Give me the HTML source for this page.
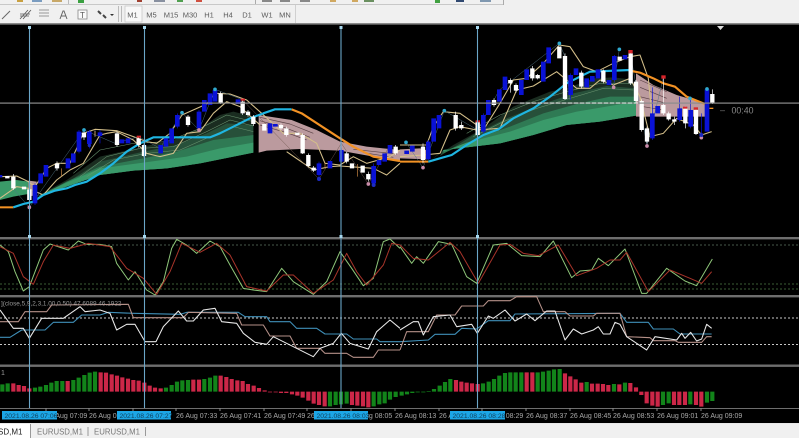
<!DOCTYPE html>
<html><head><meta charset="utf-8"><title>EURUSD,M1</title>
<style>
html,body{margin:0;padding:0;background:#000}
#p{position:relative;width:799px;height:438px;overflow:hidden;background:#000}
svg{position:absolute;left:0;top:0;filter:blur(.35px)}
text{font-family:"Liberation Sans",sans-serif}
.f{fill:none;stroke-linejoin:round}
</style></head><body><div id="p">
<svg width="799" height="438" viewBox="0 0 799 438">
<rect width="799" height="438" fill="#000"/>
<!-- main chart, left -->
<g transform="scale(.33333)">
<polygon fill="#3a9a68" points="0,545 50,540 85,545 85,582 40,590 0,600"/>
<polygon fill="#b99a9a" points="85,542 110,545 110,585 85,590"/>
<polygon fill="#1a2c20" points="110,590 200,540 300,470 430,440 520,420 600,385 660,345 700,335 760,350 760,458 600,490 500,505 400,512 300,525 200,560"/>
<polygon fill="#27503a" points="130,580 220,535 300,485 430,455 530,435 620,400 680,370 760,375 760,458 600,490 500,505 400,512 300,525 200,560"/>
<polygon fill="#2f7a54" points="120,588 200,545 300,500 430,475 530,455 640,420 760,405 760,458 600,490 500,505 400,512 300,525 200,560"/>
<polygon fill="#3a9a6a" points="110,590 200,548 300,505 430,488 560,470 660,445 760,428 760,458 600,490 500,505 400,512 300,525 200,560"/>
<g class="f" stroke="#6a9470" stroke-width="1.6">
<polyline points="220,520 300,450 400,430 500,425 600,385 680,345 760,365"/>
<polyline points="240,530 320,470 420,445 520,440 620,395 690,360 760,378"/>
<polyline points="260,530 340,480 440,460 540,450 630,410 700,380 760,395"/>
</g>
<polygon fill="#000" points="762,372 776,345 776,460 762,460"/>
<polygon fill="#bb9a9e" points="776,345 875,360 950,390 1020,425 1100,440 1200,450 1200,482 1120,470 1020,452 900,447 800,452 776,458"/>
<g class="f" stroke="#5a4145" stroke-width="2">
<polyline points="780,352 870,372 940,400"/><polyline points="780,362 860,385 930,412"/><polyline points="780,375 860,398 920,420"/><polyline points="1060,448 1190,462"/><polyline points="1090,458 1180,472"/>
</g>
<g class="f" stroke="#d4bf8a" stroke-width="3.2">
<polyline points="0,530 50,528 85,545 105,560 140,505 170,490 210,490 250,400 285,388 350,392 400,410 440,425 470,430 510,400 546,345 620,312 645,280 690,282 740,300 785,340 850,400 900,400 950,430 975,490 1020,495 1060,470 1100,490 1170,470 1200,450"/>
<polyline points="0,595 50,560 85,565 130,585 170,540 210,510 250,490 300,405 320,400 350,395 400,420 440,460 480,470 520,460 560,400 600,395 640,340 680,305 720,320 780,375"/>
<polyline points="860,455 940,510 990,500 1020,498 1120,505 1160,525 1200,490"/>
</g>
<g class="f" stroke="#4f7484" stroke-width="1.4">
<polyline points="88,622 252,390 345,430 416,410 480,445 546,338 597,390 645,268"/>
<polyline points="645,268 730,300"/>
<polyline points="30,555 88,622"/>
</g>
<polyline class="f" stroke="#70584f" stroke-width="1.4" points="728,300 957,537 1024,430 1105,552 1170,435"/>
<polyline class="f" stroke="#f39224" stroke-width="6" points="0,622 40,622"/>
<polyline class="f" stroke="#1fb5e2" stroke-width="6.5" points="40,622 70,612 100,605 130,585 165,572 200,565 225,555 260,545 300,520 340,490 380,455 420,430 460,412 630,412 660,400 700,380 750,355 790,340 825,328 875,328"/>
<polyline class="f" stroke="#f39224" stroke-width="6.5" points="875,328 905,340 1020,415 1060,440 1120,470 1200,483"/>
<path class="f" stroke="#fff" stroke-width="2" d="M40 522V570M88 560V610M171 484V512M252 390V420M285 392V410M351 394V440M416 410V442M432 430V472M564 345V380M662 275V312M728 300V345M744 330V350M760 345V378M843 370V390M859 380V410M908 400V462M925 460V502M941 498V516M1040 455V490M1105 515V545M1187 435V465"/>
<path class="f" stroke="#fff" stroke-width="13" d="M40 530V565M22 528V535M72 560V568M88 568V600M171 490V505M252 398V412M351 400V435M416 415V435M432 435V468M564 350V375M662 280V310M728 305V340M744 335V345M760 350V372M793 372V392M843 375V385M859 385V405M892 398V405M908 405V460M925 465V498M941 503V512M1040 460V485M1056 490V505M1088 497V518M1105 522V538M1187 440V460"/>
<path class="f" stroke="#0a12d6" stroke-width="2" d="M105 550V615M237 390V460M268 390V445M300 390V430M532 340V385M597 330V390M1121 490V560M957 485V540M1024 445V490"/>
<path class="f" stroke="#0a12d6" stroke-width="14" d="M0 525V532M105 555V610M122 520V550M138 495V530M204 475V505M220 460V488M237 395V455M268 395V432M300 397V408M366 418V430M384 415V430M482 435V460M498 415V440M515 385V430M532 345V380M597 335V385M613 300V335M630 280V315M645 270V305M714 298V312M810 370V400M826 372V380M957 490V525M990 483V505M1024 450V485M1121 498V550M1137 480V495M1154 460V485M1170 435V460"/>
<g fill="#2fa9cf"><circle cx="252" cy="390" r="5.5"/><circle cx="546" cy="338" r="5.5"/><circle cx="645" cy="268" r="5.5"/></g>
<g fill="#d8252a"><rect x="410" y="407" width="13" height="6"/><rect x="722" y="296" width="13" height="6"/></g>
<g fill="#c98ba8"><circle cx="88" cy="622" r="5.5"/><circle cx="597" cy="390" r="5.5"/><circle cx="1105" cy="552" r="5.5"/></g>
<g fill="#1c2ac0"><circle cx="957" cy="537" r="6"/><circle cx="1121" cy="555" r="6"/><circle cx="268" cy="436" r="5"/></g>
<path class="f" stroke="#d08a44" stroke-width="2" d="M185 505V530M285 395V408M975 488V505M1072 492V530"/>
</g>
<!-- main chart, right -->
<g transform="translate(400,0) scale(.33333)">
<polygon fill="#bb9a9e" points="0,448 60,445 85,452 85,478 0,475"/>
<polygon fill="#1a2c20" points="95,478 160,435 250,385 340,320 400,295 450,275 500,265 580,235 640,232 690,238 708,260 708,347 600,365 500,375 400,405 300,430 200,442 130,450"/>
<polygon fill="#27503a" points="120,468 220,405 320,355 420,315 520,280 620,258 708,265 708,347 600,365 500,375 400,405 300,430 200,442 130,450"/>
<polygon fill="#2f7a54" points="130,460 230,415 330,380 430,340 530,312 630,290 708,290 708,347 600,365 500,375 400,405 300,430 200,442 130,450"/>
<polygon fill="#3a9a6a" points="130,455 200,428 330,395 430,360 530,335 630,318 708,305 708,347 600,365 500,375 400,405 300,430 200,442 130,450"/>
<g class="f" stroke="#6a9470" stroke-width="1.6">
<polyline points="200,400 300,345 400,305 500,275 600,250 700,250"/>
<polyline points="220,410 310,365 410,325 510,295 610,265 700,270"/>
</g>
<polygon fill="#bb9a9e" points="708,220 760,255 830,285 915,310 915,350 708,350"/>
<g class="f" stroke="#5a4145" stroke-width="2">
<polyline points="720,240 800,275"/><polyline points="720,262 800,295"/><polyline points="720,290 800,310"/><polyline points="730,320 790,330"/>
</g>
<g class="f" stroke="#d4bf8a" stroke-width="3.2">
<polyline points="0,435 80,435 100,380 130,335 180,340 230,375 250,390 300,310 340,240 380,235 430,190 478,135 510,140 550,200 590,215 640,190 690,170 720,165 745,235 755,340"/>
<polyline points="0,470 70,465 120,460 150,390 180,380 230,390 300,385 350,270 400,258 470,215 500,240 530,265 570,265 600,240 640,255 690,235 720,290 750,410 790,400 830,355 880,375 905,405 935,395"/>
</g>
<g class="f" stroke="#4f7484" stroke-width="1.4">
<polyline points="18,427 69,503 133,332 233,390 298,270 478,130 495,170 510,300"/>
<polyline points="640,262 658,148"/><polyline points="690,155 741,438 790,232"/>
</g>
<polyline class="f" stroke="#f39224" stroke-width="6" points="0,485 85,485"/>
<polyline class="f" stroke="#1fb5e2" stroke-width="6.500" points="85,485 120,475 155,465 200,435 250,405 295,388 340,355 400,325 450,290 500,250 570,215 690,210"/>
<polyline class="f" stroke="#f39224" stroke-width="6.500" points="690,212 720,218 760,235 790,250 825,260 860,290 915,312"/>
<path class="f" stroke="#f39224" stroke-width="4" d="M928 325H940"/>
<path class="f" stroke="#fff" stroke-width="2" d="M69 430V490M167 335V392M184 365V390M233 360V410M282 295V320M331 235V278M348 250V278M397 198V242M413 222V238M495 160V300M544 212V265M610 208V250M692 155V255M708 240V310M725 298V395M741 380V430M790 235V345M806 335V362M823 350V375M856 320V385M888 325V405M937 268V312"/>
<path class="f" stroke="#fff" stroke-width="13" d="M69 440V480M167 345V385M184 375V385M233 365V405M282 300V315M331 240V250M348 255V272M397 205V235M413 225V235M478 140V175M495 168V297M544 218V260M610 212V245M659 170V182M692 160V250M708 245V303M725 303V390M741 385V425M790 315V340M806 340V358M823 358V365M856 325V370M888 330V402M937 282V308"/>
<path class="f" stroke="#0a12d6" stroke-width="2" d="M85 420V480M250 340V400M512 220V300M643 165V245M757 262V420M839 290V365M872 295V385M905 340V400"/>
<path class="f" stroke="#0a12d6" stroke-width="14" d="M20 452V462M37 437V455M85 425V478M101 355V425M117 345V385M250 345V395M265 300V345M298 268V305M315 230V270M364 240V285M380 208V240M430 185V245M446 142V190M512 225V285M528 205V225M560 235V262M577 228V245M594 208V235M627 240V255M643 168V240M675 165V178M757 340V415M773 318V340M839 325V360M872 330V380M921 268V395"/>
<g fill="#2fa9cf"><circle cx="18" cy="427" r="5.5"/><circle cx="133" cy="332" r="5.5"/><circle cx="478" cy="130" r="5.5"/><circle cx="658" cy="148" r="5.5"/><circle cx="870" cy="295" r="5.5"/><circle cx="921" cy="267" r="5.5"/></g>
<g fill="#d8252a"><rect x="227" y="361" width="13" height="6"/><rect x="685" y="150" width="13" height="10"/><rect x="784" y="226" width="13" height="10"/><rect x="849" y="320" width="13" height="6"/><rect x="881" y="322" width="13" height="7"/></g>
<g fill="#c98ba8"><circle cx="69" cy="503" r="5.5"/><circle cx="741" cy="438" r="5.5"/><circle cx="641" cy="262" r="5.5"/><circle cx="904" cy="413" r="5.5"/></g>
<circle cx="904" cy="405" r="6" fill="#1c2ac0"/>
</g>
<!-- crosshair -->
<rect x="0" y="102.500" width="799" height="1.2" fill="#8c8c8c"/>
<path d="M520 103H640" stroke="#e8e8e8" stroke-width="1" stroke-dasharray="4 2"/>
<!-- separators -->
<rect x="0" y="237" width="799" height="2.4" fill="#6e6e6e"/>
<rect x="0" y="295" width="799" height="2.4" fill="#6e6e6e"/>
<rect x="0" y="364.500" width="799" height="2.4" fill="#6e6e6e"/>
<rect x="0" y="408" width="799" height="1" fill="#6e6e6e"/>
<!-- level dashes -->
<path d="M0 245H799" stroke="#46584a" stroke-width="1" stroke-dasharray="2 2"/>
<path d="M0 284H799M0 289H799" stroke="#3a5c34" stroke-width="1" stroke-dasharray="2 2"/>
<path d="M0 318H799M0 344.500H799" stroke="#c8c8c8" stroke-width="1" stroke-dasharray="2 2"/>
<!-- histogram and oscillators -->
<g transform="translate(0,235) scale(.33333)">
<path class="f" stroke="#12841a" stroke-width="12.500" d="M7 470V448M23 470V445M105 470V458M121 470V455M138 470V450M154 470V443M170 470V438M187 470V438M220 470V435M236 470V428M253 470V420M269 470V413M285 470V410M498 470V458M515 470V450M531 470V440M547 470V436M564 470V435M613 470V432M630 470V428M646 470V422M990 470V514M1007 470V510M1023 470V508M1040 470V506M1121 470V514M1138 470V508M1154 470V505M1170 470V494M1187 470V486"/>
<path class="f" stroke="#cc2748" stroke-width="12.500" d="M40 470V445M56 470V450M72 470V453M88 470V460M203 470V438M302 470V412M318 470V413M335 470V418M351 470V422M367 470V427M384 470V431M400 470V435M416 470V437M433 470V443M449 470V452M465 470V458M482 470V460M580 470V434M597 470V434M662 470V422M679 470V426M695 470V432M712 470V436M728 470V438M744 470V447M761 470V452M777 470V459M794 470V466M810 470V472M827 470V472M843 470V474M859 470V474M876 470V478M892 470V482M908 470V488M925 470V497M941 470V506M957 470V510M974 470V514M1056 470V510M1072 470V512M1089 470V514M1105 470V517"/>
<polyline class="f" stroke="#8fc77a" stroke-width="3" points="0,30 25,50 45,110 70,168 88,155 130,45 150,27 205,45 235,18 260,28 300,28 335,35 350,85 385,135 405,110 440,165 465,180 490,140 515,40 530,13 560,30 590,55 630,18 660,35 690,90 730,160 760,165 800,170 845,100 880,140 940,178 980,140 1020,50 1055,100 1090,152 1120,130 1150,20 1170,12 1200,40"/>
<polyline class="f" stroke="#a8342a" stroke-width="3" points="0,35 40,55 70,125 100,148 130,80 160,30 210,40 265,25 330,35 380,100 430,130 470,178 510,110 545,25 600,52 650,25 690,60 740,155 800,168 850,120 880,120 940,175 1000,135 1040,55 1070,110 1100,150 1150,90 1175,25 1200,30"/>
<polyline class="f" stroke="#3f8fb8" stroke-width="3.2" points="0,307 30,307 65,285 135,285 160,262 220,262 245,240 300,240 325,232 400,235 540,238 560,232 715,232 735,245 800,245 810,260 870,260 890,280 950,280 975,297 1040,297 1060,312 1130,312 1140,320 1200,320"/>
<polyline class="f" stroke="#b59088" stroke-width="3.2" points="0,260 55,260 75,230 140,230 155,210 385,208 400,248 550,248 565,232 710,235 725,270 790,270 810,303 870,303 890,340 960,340 975,355 1040,355 1060,367 1120,367 1135,345 1200,345"/>
<polyline class="f" stroke="#e8e8e8" stroke-width="3.2" points="0,225 40,280 70,280 88,310 125,250 190,250 240,215 255,230 300,225 330,235 350,285 380,268 405,268 435,320 468,320 490,275 535,228 560,258 580,258 610,225 645,220 665,260 710,265 730,295 765,322 800,328 820,305 880,335 940,365 960,340 1000,325 1024,295 1050,325 1105,342 1130,290 1170,255 1200,280"/>
</g>
<g transform="translate(400,235) scale(.33333)">
<path class="f" stroke="#12841a" stroke-width="12.500" d="M5 470V482M21 470V478M37 470V474M53 470V472M70 470V472M86 470V468M102 470V462M119 470V452M135 470V441M151 470V432M249 470V445M266 470V440M282 470V432M298 470V422M315 470V414M331 470V412M347 470V412M364 470V412M413 470V412M429 470V410M446 470V407M462 470V403M479 470V402M560 470V441M642 470V447M675 470V443M789 470V510M806 470V505M871 470V508M921 470V503M937 470V498"/>
<path class="f" stroke="#cc2748" stroke-width="12.500" d="M168 470V435M184 470V440M200 470V443M216 470V445M233 470V447M380 470V412M397 470V412M495 470V415M511 470V424M527 470V433M544 470V443M576 470V446M593 470V446M609 470V447M625 470V450M658 470V448M691 470V444M708 470V457M724 470V480M740 470V505M757 470V512M773 470V515M822 470V510M838 470V510M855 470V510M888 470V510M904 470V515"/>
<polyline class="f" stroke="#8fc77a" stroke-width="3" points="0,35 35,85 50,65 70,85 115,20 155,28 200,125 230,145 280,30 320,25 365,62 420,65 460,18 515,128 540,108 575,105 595,70 625,92 675,42 725,175 740,175 800,100 855,138 890,152 937,72"/>
<polyline class="f" stroke="#a8342a" stroke-width="3" points="0,30 40,70 85,75 150,22 180,50 235,145 300,30 330,28 370,55 415,62 475,30 530,122 590,100 630,75 660,75 680,52 745,170 810,105 870,130 905,145 935,110"/>
<polyline class="f" stroke="#3f8fb8" stroke-width="3.2" points="0,320 85,315 105,298 165,298 185,280 230,282 265,257 330,257 345,237 660,235 680,262 745,262 760,282 820,282 840,297 935,297"/>
<polyline class="f" stroke="#b59088" stroke-width="3.2" points="0,345 20,290 85,290 110,240 165,240 185,213 250,213 265,197 330,197 350,185 410,185 430,230 495,230 510,243 580,243 590,235 660,235 680,305 750,308 760,317 825,317 835,322 905,322 920,305 935,305"/>
<polyline class="f" stroke="#e8e8e8" stroke-width="3.2" points="0,285 40,260 55,260 70,300 100,245 150,240 170,275 215,268 232,295 265,243 280,250 315,225 345,258 380,237 405,257 440,228 465,228 495,315 520,282 545,297 580,285 595,275 610,297 630,297 645,262 660,268 680,305 740,345 765,305 830,315 845,295 855,310 872,292 890,318 905,312 920,268 935,280"/>
</g>
<!-- vertical lines -->
<g stroke="#6aa6c8" stroke-width="1.1">
<path d="M29.500 27V408M144.500 27V408M341 27V408M477.500 27V408"/>
</g>
<g fill="#a8d8ee">
<rect x="28" y="26" width="3" height="3"/><rect x="143" y="26" width="3" height="3"/><rect x="339.500" y="26" width="3" height="3"/><rect x="476" y="26" width="3" height="3"/>
<rect x="28" y="235" width="3" height="3"/><rect x="143" y="235" width="3" height="3"/><rect x="339.500" y="235" width="3" height="3"/><rect x="476" y="235" width="3" height="3"/>
</g>
<polygon points="717,26 724,26 720.500,30" fill="#ddd"/>
<text x="720" y="113" font-size="9" fill="#777">–</text>
<text x="731.500" y="113.500" font-size="8.800" fill="#8a8a8a">00:40</text>
<text x="1" y="305.500" font-size="6.400" fill="#9a9a9a">](close,5,9,2,3,1.00,0.50) 47.6089 46.1922</text>
<text x="1" y="375" font-size="7" fill="#9a9a9a">1</text>
<!-- time axis -->
<path d="M46 408v3M89 408v3M133 408v3M176 408v3M220 408v3M264 408v3M307 408v3M351 408v3M395 408v3M439 408v3M482 408v3M526 408v3M570 408v3M613 408v3M657 408v3M701 408v3" stroke="#888" stroke-width="1"/>
<g font-size="7" fill="#a8a8a8">
<text x="46" y="418">26 Aug 07:09</text><text x="89" y="418">26 Aug 07:17</text><text x="176" y="418">26 Aug 07:33</text><text x="220" y="418">26 Aug 07:41</text><text x="264" y="418">26 Aug 07:49</text><text x="307" y="418">26 Aug 07:57</text><text x="351" y="418">26 Aug 08:05</text><text x="395" y="418">26 Aug 08:13</text><text x="439" y="418">26 Aug 08:21</text><text x="482" y="418">26 Aug 08:29</text><text x="526" y="418">26 Aug 08:37</text><text x="570" y="418">26 Aug 08:45</text><text x="613" y="418">26 Aug 08:53</text><text x="657" y="418">26 Aug 09:01</text><text x="701" y="418">26 Aug 09:09</text>
</g>
<g fill="#1ca6e6"><rect x="2" y="411" width="55" height="8.500"/><rect x="117" y="411" width="54" height="8.500"/><rect x="314" y="411" width="54" height="8.500"/><rect x="450" y="411" width="55" height="8.500"/></g>
<g font-size="6.800" fill="#10405c">
<text x="4.500" y="418">2021.08.26 07:06</text><text x="119.500" y="418">2021.08.26 07:27</text><text x="316.500" y="418">2021.08.26 08:03</text><text x="452.500" y="418">2021.08.26 08:28</text>
</g>
<!-- toolbar -->
<rect x="0" y="0" width="799" height="23.500" fill="#f0f0f0"/>
<rect x="0" y="23" width="799" height="1.600" fill="#8a8a8a"/>
<rect x="0" y="4" width="503" height="1" fill="#c8c8c8"/>
<rect x="503" y="0" width="1" height="5" fill="#aaa"/>
<rect x="255" y="0" width="1" height="4" fill="#aaa"/><rect x="68" y="0" width="1" height="4" fill="#bbb"/>
<g>
<rect x="17" y="0" width="6" height="2" fill="#c9a040"/><rect x="32" y="0" width="10" height="2" fill="#7a9cc0"/><rect x="52" y="0" width="10" height="2" fill="#c8a868"/><rect x="78" y="0" width="6" height="3" fill="#3aa040"/><rect x="137" y="0" width="5" height="2" fill="#a04030"/><rect x="154" y="0" width="11" height="2" fill="#8890a0"/><rect x="177" y="0" width="6" height="2" fill="#50a050"/><rect x="196" y="0" width="6" height="2" fill="#d05040"/><rect x="262" y="0" width="10" height="2" fill="#888"/><rect x="280" y="0" width="10" height="2" fill="#888"/><rect x="300" y="0" width="10" height="2" fill="#888"/><rect x="330" y="0" width="6" height="2" fill="#d0a860"/><rect x="352" y="0" width="6" height="2" fill="#d0a860"/><rect x="364" y="0" width="10" height="2" fill="#6a9060"/><rect x="435" y="0" width="5" height="3" fill="#40a040"/><rect x="456" y="0" width="8" height="2" fill="#304870"/><rect x="480" y="0" width="11" height="2" fill="#8098b0"/>
</g>
<path d="M2 19L10 11" stroke="#666" stroke-width="1"/>
<path d="M20 19L28 10M23 19L31 10M20 14H30M20 16H29" stroke="#555" stroke-width=".8"/>
<path d="M39 10H49M39 13H49M39 16H49" stroke="#999" stroke-width="1"/>
<path d="M60 19l3-8h1l3 8M61.500 16h4" stroke="#666" stroke-width="1" fill="none"/>
<rect x="78" y="10" width="9" height="9" fill="#fafafa" stroke="#888" stroke-width=".8"/>
<text x="80" y="18" font-size="8" fill="#555">T</text>
<path d="M98 11l3 3M103 15l3 3" stroke="#444" stroke-width="2"/>
<polygon points="110,14 114,14 112,16" fill="#333"/>
<rect x="118" y="6" width="1" height="16" fill="#bbb"/><rect x="121" y="6" width="1" height="16" fill="#bbb"/>
<rect x="125" y="6" width="17" height="16" fill="#f8f8f8" stroke="#c8c8c8" stroke-width=".8"/>
<rect x="295" y="5" width="1" height="18" fill="#d0d0d0"/>
<g font-size="7.500" fill="#5a5a5a" text-anchor="middle">
<text x="132.500" y="17.500">M1</text><text x="151.500" y="17.500">M5</text><text x="171" y="17.500">M15</text><text x="190" y="17.500">M30</text><text x="209" y="17.500">H1</text><text x="228" y="17.500">H4</text><text x="247" y="17.500">D1</text><text x="267" y="17.500">W1</text><text x="285" y="17.500">MN</text>
</g>
<!-- bottom tabs -->
<rect x="0" y="423" width="799" height="1" fill="#e8e8e8"/>
<rect x="0" y="424" width="799" height="14" fill="#f0f0f0"/>
<rect x="0" y="424" width="30" height="14" fill="#fff"/>
<rect x="30" y="424" width="1" height="14" fill="#999"/>
<rect x="87.500" y="427" width="1" height="9" fill="#999"/>
<rect x="145" y="427" width="1" height="9" fill="#999"/>
<text x="-2" y="434.500" font-size="8" fill="#222">SD,M1</text>
<text x="37" y="434.500" font-size="7.800" fill="#777">EURUSD,M1</text>
<text x="94" y="434.500" font-size="7.800" fill="#777">EURUSD,M1</text>
</svg>
</div></body></html>
